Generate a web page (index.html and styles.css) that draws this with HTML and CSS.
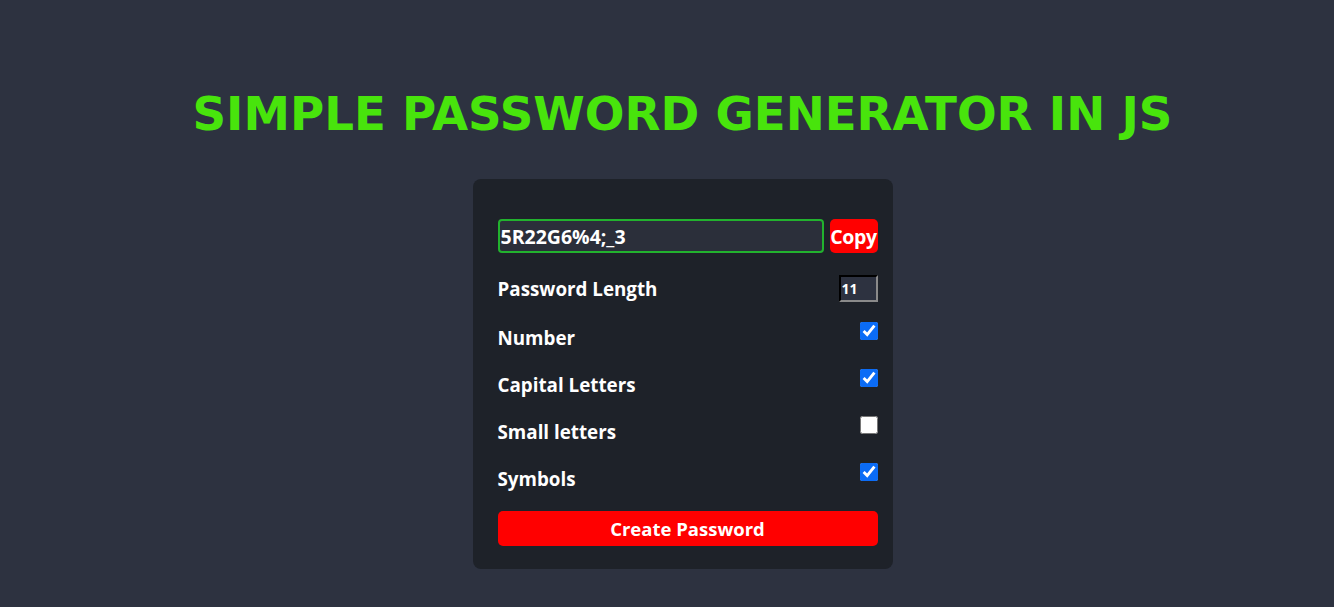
FILE: index.html
```html
<!DOCTYPE html>
<html>
<head>
<meta charset="utf-8">
<link rel="stylesheet" href="styles.css">
</head>
<body>
<div class="page">
  <h1 class="title">SIMPLE PASSWORD GENERATOR IN JS</h1>
  <div class="card">
    <div class="pw-row">
      <input class="pw-input" type="text" value="5R22G6%4;_3">
      <button class="copy-btn">Copy</button>
    </div>
    <div class="row len-row">
      <span class="label">Password Length</span>
      <input class="len-input" type="number" value="11">
    </div>
    <div class="row opt-row">
      <span class="label">Number</span>
      <input class="chk" type="checkbox" checked>
    </div>
    <div class="row opt-row">
      <span class="label">Capital Letters</span>
      <input class="chk" type="checkbox" checked>
    </div>
    <div class="row opt-row">
      <span class="label">Small letters</span>
      <input class="chk" type="checkbox">
    </div>
    <div class="row opt-row">
      <span class="label">Symbols</span>
      <input class="chk" type="checkbox" checked>
    </div>
    <button class="create-btn">Create Password</button>
  </div>
</div>
</body>
</html>
```

FILE: styles.css
```css
html, body {
  margin: 0;
  padding: 0;
  background: #2d3240;
}
body {
  font-family: "Open Sans", "Noto Sans", sans-serif;
  color: #fff;
}
.page {
  display: flex;
  flex-direction: column;
  align-items: center;
  padding-left: 31px;
  padding-top: 84px;
}
.title {
  margin: 0;
  font-family: "DejaVu Sans", Verdana, sans-serif;
  font-weight: bold;
  font-size: 46.7px;
  line-height: 60px;
  color: #48e40c;
  letter-spacing: 0;
}
.card {
  margin-top: 35px;
  width: 380px;
  padding: 40px 15px 23px 25px;
  background: #1e2229;
  border-radius: 8px;
  display: flex;
  flex-direction: column;
}
.pw-row {
  display: flex;
  gap: 6px;
  height: 34px;
}
.pw-input {
  flex: 1;
  box-sizing: border-box;
  height: 34px;
  margin: 0;
  border: 2px solid #22b22e;
  border-radius: 4px;
  background: #2b2f3a;
  color: #fff;
  font-family: "Open Sans", "Noto Sans", sans-serif;
  font-weight: bold;
  font-size: 19.5px;
  padding: 1px 0 0 1px;
  outline: none;
}
.copy-btn {
  width: 48px;
  height: 34px;
  margin: 0;
  border: none;
  border-radius: 5px;
  background: #ff0000;
  color: #fff;
  font-family: "Open Sans", "Noto Sans", sans-serif;
  font-weight: bold;
  font-size: 19.5px;
  padding: 1px 0 0 0;
  letter-spacing: -0.3px;
}
.row {
  display: flex;
  justify-content: space-between;
}
.label {
  font-size: 18.8px;
  font-weight: bold;
  line-height: 24px;
}
.len-row {
  margin-top: 22px;
  align-items: center;
  height: 27px;
}
.len-input {
  box-sizing: border-box;
  width: 39px;
  height: 27px;
  margin: 0;
  background: #2d3240;
  color: #fff;
  border: 2px inset #767676;
  border-color: #2d3240 #8a8a8a #8a8a8a #2d3240;
  font-family: "Open Sans", "Noto Sans", sans-serif;
  font-weight: bold;
  font-size: 14px;
  padding: 0 0 0 1px;
  -moz-appearance: textfield;
}
.len-input::-webkit-inner-spin-button,
.len-input::-webkit-outer-spin-button {
  -webkit-appearance: none;
  margin: 0;
}
.opt-row {
  margin-top: 21px;
  height: 26px;
  align-items: flex-start;
}
.opt-row .label {
  margin-top: 3px;
  margin-bottom: -1px;
}
.chk {
  width: 18px;
  height: 18px;
  margin: -1px 0 0 0;
  accent-color: #0b6cf6;
}
.create-btn {
  margin-top: 21px;
  height: 35px;
  border: none;
  border-radius: 5px;
  background: #ff0000;
  color: #fff;
  font-family: "Open Sans", "Noto Sans", sans-serif;
  font-weight: bold;
  font-size: 18.5px;
  padding: 0;
}
```
